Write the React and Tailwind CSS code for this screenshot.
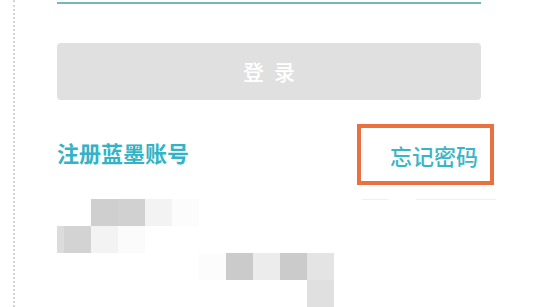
import React from "react";

const FONT = { fontFamily: '"Noto Sans CJK SC", "Noto Sans", sans-serif' };

// blurred mosaic blocks below the form (x offset from column start, colour class)
const MOSAIC_ROWS = [
  [
    { w: "w-[34px]", bg: "bg-transparent" },
    { w: "w-[27px]", bg: "bg-[#cfcfcf]" },
    { w: "w-[27px]", bg: "bg-[#d1d1d1]" },
    { w: "w-[27px]", bg: "bg-[#f3f3f3]" },
    { w: "w-[27px]", bg: "bg-[#fcfcfc]" },
  ],
  [
    { w: "w-[7px]", bg: "bg-[#dcdcdc]" },
    { w: "w-[27px]", bg: "bg-[#d3d3d3]" },
    { w: "w-[27px]", bg: "bg-[#f3f3f3]" },
    { w: "w-[27px]", bg: "bg-[#fbfbfb]" },
  ],
  [
    { w: "w-[142px]", bg: "bg-transparent" },
    { w: "w-[27px]", bg: "bg-[#fcfcfc]" },
    { w: "w-[27px]", bg: "bg-[#cbcbcb]" },
    { w: "w-[27px]", bg: "bg-[#ececec]" },
    { w: "w-[27px]", bg: "bg-[#cbcbcb]" },
    { w: "w-[27px]", bg: "bg-[#e4e4e4]" },
  ],
  [
    { w: "w-[250px]", bg: "bg-transparent" },
    { w: "w-[27px]", bg: "bg-[#e0e0e0]" },
  ],
];

export default function App() {
  return (
    <div className="flex h-[307px] w-[546px] overflow-hidden bg-white" style={FONT}>
      {/* dotted guide on the left */}
      <div className="ml-[13px] h-full border-l-2 border-dotted border-[#d4d4d4]" />

      <div className="ml-[42px] flex w-[424px] flex-col">
        {/* input underline */}
        <div className="mt-[2px] h-[2px] bg-[#72b9bf]" />

        {/* Login button */}
        <button className="mt-[39px] flex h-[57px] items-center justify-center gap-[10px] rounded-[4px] bg-[#e0e0e0] text-[21px] font-medium leading-none text-white">
          <span>登</span>
          <span>录</span>
        </button>

        {/* Links */}
        <div className="relative mt-[37px] flex h-[30px] items-start justify-between">
          <span className="text-[22px] font-semibold leading-[30px] text-[#33b3c5]">
            注册蓝墨账号
          </span>
          <span className="relative mr-[3px] mt-[3px] text-[22px] font-medium leading-[30px] text-[#3ab5c6]">
            忘记密码
            <span className="absolute -bottom-[15px] -left-[33px] -right-[16px] -top-[16px] border-4 border-[#e9713f]" />
          </span>
          <div className="absolute left-[305px] top-[62px] h-px w-[26px] bg-[#efefef]" />
          <div className="absolute left-[359px] top-[62px] h-px w-[80px] bg-[#efefef]" />
        </div>

        {/* Mosaic */}
        <div className="mt-[32px] flex flex-col">
          {MOSAIC_ROWS.map((row, i) => (
            <div key={i} className="flex h-[27px]">
              {row.map((cell, j) => (
                <div key={j} className={`h-full ${cell.w} ${cell.bg}`} />
              ))}
            </div>
          ))}
        </div>
      </div>
    </div>
  );
}
